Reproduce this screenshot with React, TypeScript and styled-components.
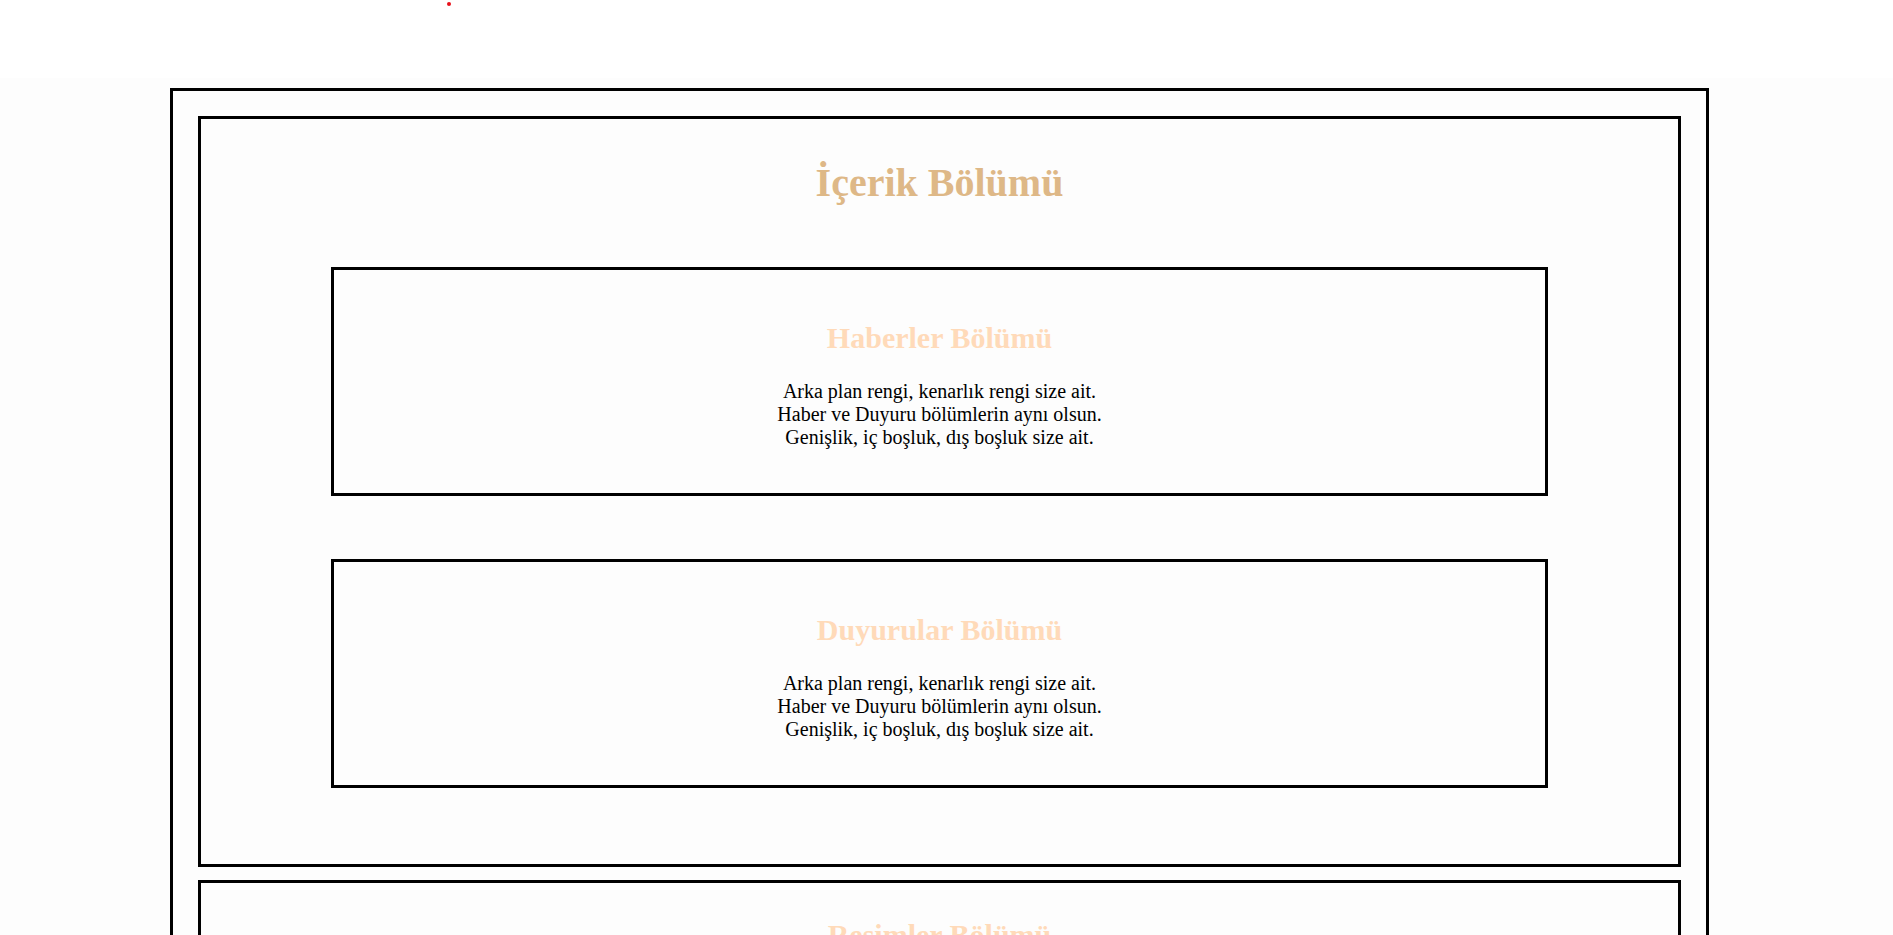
import React from "react";
import styled, { createGlobalStyle } from "styled-components";

const GlobalStyle = createGlobalStyle`
  html, body {
    margin: 0;
    padding: 0;
    background: #fdfdfd;
    overflow: hidden;
    font-family: "Liberation Serif", "Times New Roman", serif;
  }
`;

const TopBar = styled.header`
  height: 78px;
  background: #ffffff;
  box-sizing: border-box;
  padding: 2px 0 0 447px;
`;

const RedDot = styled.span`
  display: block;
  width: 4px;
  height: 4px;
  border-radius: 50%;
  background: #e8101a;
`;

const Page = styled.main`
  padding: 10px 0 0 170px;
`;

const OuterFrame = styled.div`
  width: 1539px;
  box-sizing: border-box;
  border: 3px solid #000;
  padding: 25px;
  display: flex;
  flex-direction: column;
  gap: 13px;
`;

const Section = styled.section<{ $padTop: number; $padBottom: number; $gap: number }>`
  border: 3px solid #000;
  display: flex;
  flex-direction: column;
  align-items: center;
  padding: ${(p) => p.$padTop}px 0 ${(p) => p.$padBottom}px;
  gap: ${(p) => p.$gap}px;
`;

const MainTitle = styled.h1`
  margin: 0;
  font-size: 40px;
  line-height: 42px;
  font-weight: bold;
  color: #deb887;
  text-align: center;
`;

const Card = styled.article`
  width: 1217px;
  box-sizing: border-box;
  border: 3px solid #000;
  padding: 51px 0 44.5px;
  text-align: center;
`;

const CardTitle = styled.h2`
  margin: 0 0 24px;
  font-size: 30px;
  line-height: 34.5px;
  font-weight: bold;
  color: #ffdab9;
  text-align: center;
`;

const CardText = styled.p`
  margin: 0;
  font-size: 20px;
  line-height: 23px;
  color: #000;
`;

const cards = ["Haberler Bölümü", "Duyurular Bölümü"];

export default function App() {
  return (
    <>
      <GlobalStyle />
      <TopBar>
        <RedDot />
      </TopBar>
      <Page>
        <OuterFrame>
          <Section $padTop={43} $padBottom={76} $gap={63}>
            <MainTitle>İçerik Bölümü</MainTitle>
            {cards.map((t) => (
              <Card key={t}>
                <CardTitle>{t}</CardTitle>
                <CardText>
                  Arka plan rengi, kenarlık rengi size ait.
                  <br />
                  Haber ve Duyuru bölümlerin aynı olsun.
                  <br />
                  Genişlik, iç boşluk, dış boşluk size ait.
                </CardText>
              </Card>
            ))}
          </Section>
          <Section $padTop={35} $padBottom={200} $gap={0}>
            <CardTitle>Resimler Bölümü</CardTitle>
          </Section>
        </OuterFrame>
      </Page>
    </>
  );
}
